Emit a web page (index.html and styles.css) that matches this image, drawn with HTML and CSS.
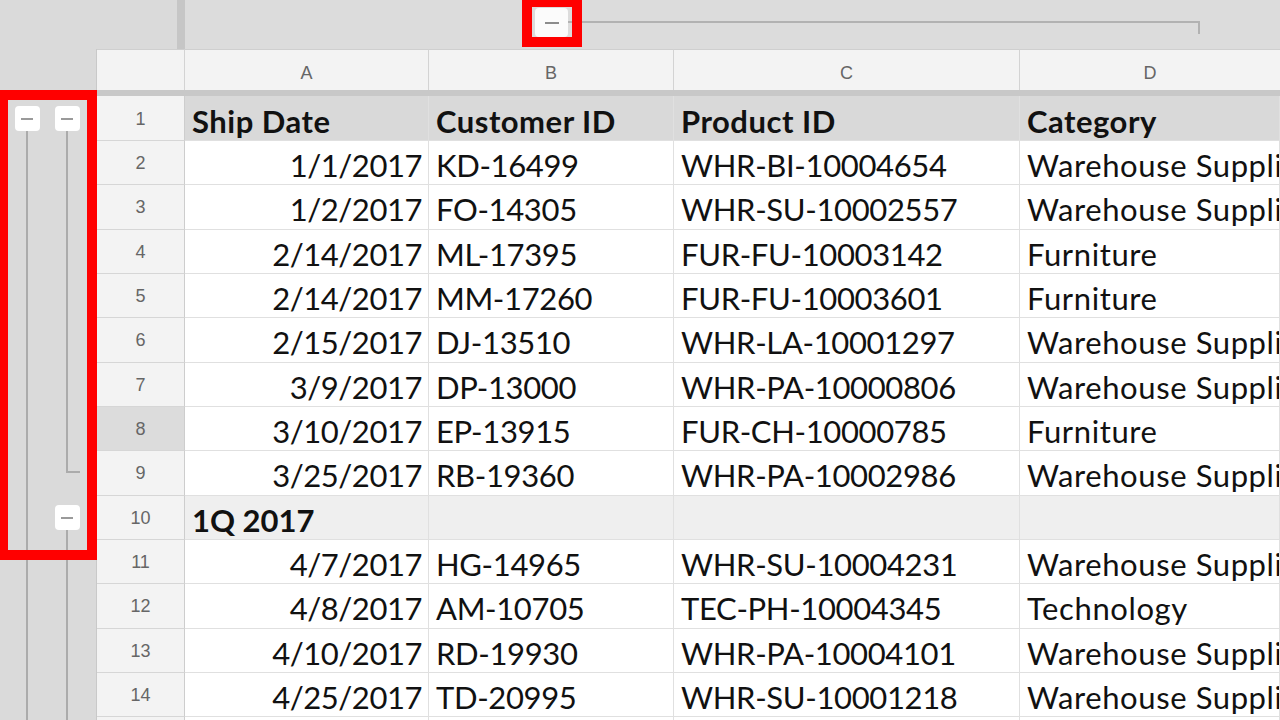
FILE: index.html
```html
<!DOCTYPE html>
<html>
<head>
<meta charset="utf-8">
<link rel="stylesheet" href="styles.css">
</head>
<body>
<div class="app">
  <div class="topbar">
    <div class="tb-corner"></div>
    <div class="tb-freeze"></div>
    <div class="tb-groups">
      <div class="gbtn gbtn-top"><span class="minus"></span></div>
      <div class="gline-h"></div>
    </div>
  </div>
  <div class="main">
    <div class="gutter">
      <div class="g-spacer"></div>
      <div class="g-row g-r1">
        <div class="track t1"><div class="fill"></div><div class="gbtn"><span class="minus"></span></div><div class="vline"></div></div>
        <div class="track t2"><div class="fill"></div><div class="gbtn"><span class="minus"></span></div><div class="vline"></div></div>
      </div>
      <div class="g-row"><div class="track t1"><div class="vline"></div></div><div class="track t2"><div class="vline"></div></div></div>
      <div class="g-row"><div class="track t1"><div class="vline"></div></div><div class="track t2"><div class="vline"></div></div></div>
      <div class="g-row"><div class="track t1"><div class="vline"></div></div><div class="track t2"><div class="vline"></div></div></div>
      <div class="g-row"><div class="track t1"><div class="vline"></div></div><div class="track t2"><div class="vline"></div></div></div>
      <div class="g-row"><div class="track t1"><div class="vline"></div></div><div class="track t2"><div class="vline"></div></div></div>
      <div class="g-row"><div class="track t1"><div class="vline"></div></div><div class="track t2"><div class="vline"></div></div></div>
      <div class="g-row"><div class="track t1"><div class="vline"></div></div><div class="track t2"><div class="vline"></div></div></div>
      <div class="g-row"><div class="track t1"><div class="vline"></div></div><div class="track t2"><div class="bracket"></div></div></div>
      <div class="g-row">
        <div class="track t1"><div class="vline"></div></div>
        <div class="track t2"><div class="fill"></div><div class="gbtn"><span class="minus"></span></div><div class="vline"></div></div>
      </div>
      <div class="g-row"><div class="track t1"><div class="vline"></div></div><div class="track t2"><div class="vline"></div></div></div>
      <div class="g-row"><div class="track t1"><div class="vline"></div></div><div class="track t2"><div class="vline"></div></div></div>
      <div class="g-row"><div class="track t1"><div class="vline"></div></div><div class="track t2"><div class="vline"></div></div></div>
      <div class="g-row"><div class="track t1"><div class="vline"></div></div><div class="track t2"><div class="vline"></div></div></div>
      <div class="g-row"><div class="track t1"><div class="vline"></div></div><div class="track t2"><div class="vline"></div></div></div>
    </div>
    <div class="sheet">
      <div class="ch corner"></div>
      <div class="ch">A</div>
      <div class="ch">B</div>
      <div class="ch">C</div>
      <div class="ch last">D</div>
      <div class="freeze-row"></div>

      <div class="rn">1</div>
      <div class="c hdr">Ship Date</div>
      <div class="c hdr">Customer ID</div>
      <div class="c hdr">Product ID</div>
      <div class="c hdr">Category</div>

      <div class="rn">2</div><div class="c num">1/1/2017</div><div class="c id">KD-16499</div><div class="c id">WHR-BI-10004654</div><div class="c">Warehouse Supplies</div>
      <div class="rn">3</div><div class="c num">1/2/2017</div><div class="c id">FO-14305</div><div class="c id">WHR-SU-10002557</div><div class="c">Warehouse Supplies</div>
      <div class="rn">4</div><div class="c num">2/14/2017</div><div class="c id">ML-17395</div><div class="c id">FUR-FU-10003142</div><div class="c">Furniture</div>
      <div class="rn">5</div><div class="c num">2/14/2017</div><div class="c id">MM-17260</div><div class="c id">FUR-FU-10003601</div><div class="c">Furniture</div>
      <div class="rn">6</div><div class="c num">2/15/2017</div><div class="c id">DJ-13510</div><div class="c id">WHR-LA-10001297</div><div class="c">Warehouse Supplies</div>
      <div class="rn">7</div><div class="c num">3/9/2017</div><div class="c id">DP-13000</div><div class="c id">WHR-PA-10000806</div><div class="c">Warehouse Supplies</div>
      <div class="rn sel">8</div><div class="c num">3/10/2017</div><div class="c id">EP-13915</div><div class="c id">FUR-CH-10000785</div><div class="c">Furniture</div>
      <div class="rn">9</div><div class="c num">3/25/2017</div><div class="c id">RB-19360</div><div class="c id">WHR-PA-10002986</div><div class="c">Warehouse Supplies</div>
      <div class="rn">10</div><div class="c sub">1Q 2017</div><div class="c sub"></div><div class="c sub"></div><div class="c sub"></div>
      <div class="rn">11</div><div class="c num">4/7/2017</div><div class="c id">HG-14965</div><div class="c id">WHR-SU-10004231</div><div class="c">Warehouse Supplies</div>
      <div class="rn">12</div><div class="c num">4/8/2017</div><div class="c id">AM-10705</div><div class="c id">TEC-PH-10004345</div><div class="c">Technology</div>
      <div class="rn">13</div><div class="c num">4/10/2017</div><div class="c id">RD-19930</div><div class="c id">WHR-PA-10004101</div><div class="c">Warehouse Supplies</div>
      <div class="rn">14</div><div class="c num">4/25/2017</div><div class="c id">TD-20995</div><div class="c id">WHR-SU-10001218</div><div class="c">Warehouse Supplies</div>
      <div class="rn">15</div><div class="c num">5/2/2017</div><div class="c id">JL-15130</div><div class="c id">WHR-BI-10001890</div><div class="c">Warehouse Supplies</div>
    </div>
  </div>
  <div class="hl hl-left"></div>
  <div class="hl hl-top"></div>
</div>
</body>
</html>
```

FILE: styles.css
```css
* { box-sizing: border-box; }
html, body { margin: 0; padding: 0; }
body { width: 1280px; height: 720px; overflow: hidden; background: #dadada; }

.app {
  position: relative;
  width: 1280px;
  height: 720px;
  overflow: hidden;
  background: #dadada;
  display: flex;
  flex-direction: column;
}

/* top outline bar */
.topbar { height: 49px; display: flex; flex: none; }
.tb-corner { width: 177px; background: #dadada; }
.tb-freeze { width: 8px; background: #c6c6c6; }
.tb-groups {
  flex: 1;
  background: #dcdcdc;
  display: flex;
  align-items: flex-start;
  padding-left: 350px;
}
.gbtn {
  width: 25px;
  height: 25px;
  flex: none;
  background: #ffffff;
  border-radius: 4px;
  display: flex;
  align-items: center;
  justify-content: center;
}
.minus { display: block; width: 12px; height: 2px; background: #9a9a9a; }
.gbtn-top { width: 33px; height: 29px; margin-top: 8px; background: #fbfbfb; }
.gbtn-top .minus { width: 14px; background: #8c8c8c; }
.gline-h {
  width: 632px;
  height: 13px;
  margin-top: 21px;
  border-top: 2px solid #b2b2b2;
  border-right: 2px solid #b2b2b2;
}

/* main area */
.main { flex: 1; display: flex; min-height: 0; }

.gutter { width: 96px; flex: none; display: flex; flex-direction: column; background: #dadada; }
.g-spacer { height: 47px; flex: none; }
.g-row { height: 44.33px; flex: none; display: flex; }
.g-row.g-r1 { height: 45px; }
.track { display: flex; flex-direction: column; align-items: center; }
.track.t1 { width: 54px; }
.track.t2 { width: 26px; align-items: flex-start; }
.track.t2 .vline { margin-left: 12px; }
.track.t2 .gbtn { margin-left: 0.5px; }
.fill { flex: 1; }
.vline { width: 2px; flex: 1; background: #ababab; }
.bracket {
  margin-left: 12px;
  width: 14px;
  height: 22px;
  border-left: 2px solid #ababab;
  border-bottom: 2px solid #ababab;
}

/* sheet grid */
.sheet {
  flex: 1;
  display: grid;
  grid-template-columns: 88px 244px 245px 346px 1fr;
  grid-template-rows: 41px 6px 45px repeat(14, 44.33px);
  background: #ffffff;
  border-left: 1px solid #c9c9c9;
  overflow: hidden;
}

.ch {
  background: #f3f3f3;
  border-right: 1px solid #d3d3d3;
  border-top: 1px solid #cfcfcf;
  font-family: "Liberation Sans", Arial, sans-serif;
  font-size: 18px;
  color: #666;
  display: flex;
  align-items: center;
  justify-content: center;
  padding-top: 6px;
}
.ch.last { border-right: none; }
.freeze-row { grid-column: 1 / -1; background: #c8c8c8; }

.rn {
  background: #f3f3f3;
  border-right: 1px solid #cdcdcd;
  border-bottom: 1px solid #d6d6d6;
  font-family: "Liberation Sans", Arial, sans-serif;
  font-size: 18px;
  color: #666;
  display: flex;
  align-items: center;
  justify-content: center;
  padding-top: 2px;
}
.rn.sel { background: #dcdcdc; }

.c {
  border-right: 1px solid #e0e0e0;
  border-bottom: 1px solid #e0e0e0;
  font-family: "Lato", "Carlito", Calibri, sans-serif;
  font-size: 31px;
  line-height: 1.2;
  color: #111111;
  display: flex;
  align-items: flex-end;
  padding: 0 6px 0 7px;
  white-space: nowrap;
  overflow: hidden;
  letter-spacing: 0.6px;
}
.c.num { justify-content: flex-end; letter-spacing: -0.45px; }
.c.id { letter-spacing: -0.35px; }
.c.hdr { background: #d9d9d9; font-weight: bold; letter-spacing: 0.5px; }
.c.sub { background: #efefef; font-weight: bold; letter-spacing: 0; }

/* red highlight overlays */
.hl { position: absolute; border: 10px solid #ff0000; pointer-events: none; }
.hl-left { left: -2px; top: 90px; width: 99px; height: 470px; }
.hl-top { left: 522px; top: -3px; width: 60px; height: 50px; }
```
